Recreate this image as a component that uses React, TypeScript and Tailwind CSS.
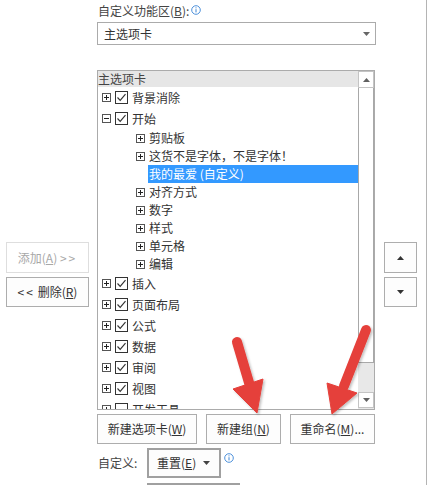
import React from "react";

const FONT = { fontFamily: '"Noto Sans CJK SC", "Noto Sans", sans-serif' };

type Row = { label: string; level: 0 | 1; checked?: boolean; expanded?: boolean; selected?: boolean };

const rows: Row[] = [
  { label: "背景消除", level: 0, checked: true },
  { label: "开始", level: 0, checked: true, expanded: true },
  { label: "剪贴板", level: 1 },
  { label: "这货不是字体，不是字体！", level: 1 },
  { label: "我的最爱 (自定义)", level: 1, selected: true },
  { label: "对齐方式", level: 1 },
  { label: "数字", level: 1 },
  { label: "样式", level: 1 },
  { label: "单元格", level: 1 },
  { label: "编辑", level: 1 },
  { label: "插入", level: 0, checked: true },
  { label: "页面布局", level: 0, checked: true },
  { label: "公式", level: 0, checked: true },
  { label: "数据", level: 0, checked: true },
  { label: "审阅", level: 0, checked: true },
  { label: "视图", level: 0, checked: true },
  { label: "开发工具", level: 0, checked: false },
];

const ExpandBox = ({ open }: { open?: boolean }) => (
  <svg width="9" height="9" viewBox="0 0 9 9" className="shrink-0">
    <rect x="0.5" y="0.5" width="8" height="8" fill="white" stroke="#555" />
    <line x1="2" y1="4.5" x2="7" y2="4.5" stroke="#222" />
    {!open && <line x1="4.5" y1="2" x2="4.5" y2="7" stroke="#222" />}
  </svg>
);

const CheckBox = ({ checked }: { checked?: boolean }) => (
  <svg width="13" height="13" viewBox="0 0 13 13" className="shrink-0">
    <rect x="0.5" y="0.5" width="12" height="12" fill="white" stroke="#333" />
    {checked && <polyline points="2.5,6.5 5.2,9.3 10.5,3.2" fill="none" stroke="#333" strokeWidth="1.2" />}
  </svg>
);

const InfoIcon = () => (
  <svg width="10" height="10" viewBox="0 0 10 10" className="shrink-0">
    <circle cx="5" cy="5" r="4.3" fill="none" stroke="#3a84d6" strokeWidth="0.9" />
    <line x1="5" y1="4.2" x2="5" y2="7.4" stroke="#3a84d6" strokeWidth="1" />
    <circle cx="5" cy="2.8" r="0.6" fill="#3a84d6" />
  </svg>
);

const Tri = ({ up, color = "#555" }: { up?: boolean; color?: string }) => (
  <svg width="7" height="4" viewBox="0 0 7 4">
    <polygon points={up ? "0,4 7,4 3.5,0" : "0,0 7,0 3.5,4"} fill={color} />
  </svg>
);

const Btn = ({ children, className = "" }: { children: React.ReactNode; className?: string }) => (
  <div className={`flex items-center justify-center border border-[#adadad] bg-[#fdfdfd] text-[12px] text-[#333] ${className}`}>
    {children}
  </div>
);

const TreeRow = ({ row }: { row: Row }) => {
  if (row.level === 0) {
    return (
      <div className="flex h-[21px] shrink-0 items-center pl-[4px]">
        <ExpandBox open={row.expanded} />
        <div className="ml-[4px]">
          <CheckBox checked={row.checked} />
        </div>
        <span className="ml-[4px] whitespace-nowrap">{row.label}</span>
      </div>
    );
  }
  if (row.selected) {
    return (
      <div className="flex h-[18px] shrink-0 items-center pl-[50px]">
        <div className="flex h-full flex-1 items-center bg-[#3399ff] px-[1px] text-white whitespace-nowrap">
          {row.label}
        </div>
      </div>
    );
  }
  return (
    <div className="flex h-[18px] shrink-0 items-center pl-[38px]">
      <ExpandBox />
      <span className="ml-[4px] whitespace-nowrap">{row.label}</span>
    </div>
  );
};

export default function App() {
  return (
    <div className="relative h-[485px] w-[429px] overflow-hidden bg-white text-[12px] text-[#333]" style={FONT}>
      <div className="flex">
        {/* left add/remove */}
        <div className="flex w-[97px] shrink-0 flex-col gap-[4px] pl-[6px] pt-[242px]">
          <div className="flex h-[31px] w-[83px] items-center justify-center border border-[#dedede] text-[#a8a8a8]">
            添加(<span className="underline">A</span>)&nbsp;<span className="tracking-[2px]">&gt;&gt;</span>
          </div>
          <Btn className="h-[30px] w-[83px]">
            <span className="tracking-[2px]">&lt;&lt;</span>&nbsp;删除(<span className="underline">R</span>)
          </Btn>
        </div>

        {/* middle */}
        <div className="flex w-[278px] shrink-0 flex-col">
          <div className="flex h-[22px] items-center gap-[2px] pl-[1px] text-[#444]">
            <span>
              自定义功能区(<span className="underline">B</span>):
            </span>
            <div className="-mt-[3px]">
              <InfoIcon />
            </div>
          </div>
          <div className="flex h-[23px] w-[279px] items-center justify-between border border-[#ababab] pl-[6px] pr-[5px]">
            <span>主选项卡</span>
            <Tri color="#666" />
          </div>

          <div className="mt-[25px] flex h-[340px] border border-[#ababab]">
            <div className="flex flex-1 flex-col overflow-hidden">
              <div className="flex h-[16px] shrink-0 items-center bg-[#e6e6e6] text-[#444]">主选项卡</div>
              {rows.map((r) => (
                <TreeRow key={r.label} row={r} />
              ))}
            </div>
            <div className="flex w-[16px] shrink-0 flex-col bg-[#e8e8e8]">
              <div className="flex h-[17px] shrink-0 items-center justify-center border border-[#c4c4c4] bg-white pt-[1px]">
                <Tri up color="#606060" />
              </div>
              <div className="h-[275px] shrink-0 border-x border-b border-[#a8a8a8] bg-white" />
              <div className="flex-1" />
              <div className="flex h-[16px] shrink-0 items-center justify-center border border-[#c4c4c4] bg-white">
                <Tri color="#606060" />
              </div>
              <div className="h-[1px] shrink-0" />
            </div>
          </div>

          <div className="mt-[4px] flex gap-[9px]">
            <Btn className="h-[30px] w-[100px]">
              新建选项卡(<span className="underline">W</span>)
            </Btn>
            <Btn className="h-[30px] w-[75px]">
              新建组(<span className="underline">N</span>)
            </Btn>
            <Btn className="h-[30px] w-[85px]">
              重命名(<span className="underline">M</span>)...
            </Btn>
          </div>

          <div className="mt-[4px] flex">
            <div className="flex h-[30px] w-[50px] shrink-0 items-center pl-[1px] text-[#444]">自定义:</div>
            <div className="flex h-[30px] w-[74px] shrink-0 items-center gap-[7px] border-2 border-[#a0a0a0] bg-[#fdfdfd] pl-[8px]">
              <span>
                重置(<span className="underline">E</span>)
              </span>
              <Tri color="#444" />
            </div>
            <div className="ml-[3px] mt-[5px]">
              <InfoIcon />
            </div>
          </div>
          <div className="ml-[50px] mt-[5px] h-[20px] w-[93px] border-2 border-[#a0a0a0]" />
        </div>

        {/* right move up/down */}
        <div className="flex shrink-0 flex-col gap-[4px] pl-[9px] pt-[242px]">
          <Btn className="h-[31px] w-[33px]">
            <Tri up color="#333" />
          </Btn>
          <Btn className="h-[30px] w-[33px]">
            <Tri color="#333" />
          </Btn>
        </div>

        <div className="ml-auto mr-[2px] h-[485px] w-px bg-[#b4b4b4]" />
      </div>

      {/* red annotation arrows */}
      <svg className="pointer-events-none absolute left-0 top-0" width="429" height="485" viewBox="0 0 429 485">
        <defs>
          <filter id="sh" x="-20%" y="-20%" width="140%" height="140%">
            <feDropShadow dx="1.5" dy="1.5" stdDeviation="1.2" floodColor="#000" floodOpacity="0.25" />
          </filter>
        </defs>
        <g filter="url(#sh)" fill="#e5403a" stroke="#e5403a">
          <line x1="237" y1="342" x2="250" y2="386" strokeWidth="10" strokeLinecap="round" />
          <polygon points="233,389 263,379 257,413" strokeWidth="1" strokeLinejoin="round" />
          <line x1="366" y1="330" x2="344" y2="386" strokeWidth="10" strokeLinecap="round" />
          <polygon points="327,383 357,393 332,414" strokeWidth="1" strokeLinejoin="round" />
        </g>
      </svg>
    </div>
  );
}
